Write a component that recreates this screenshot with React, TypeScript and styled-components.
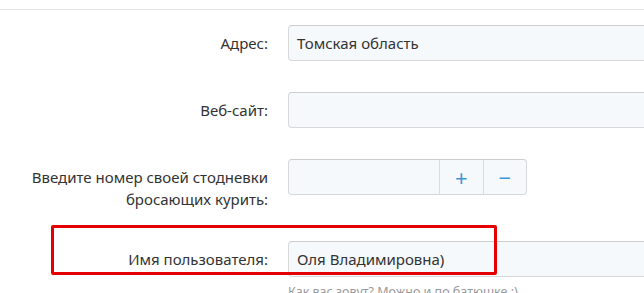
import styled, { createGlobalStyle } from 'styled-components'

const GlobalStyle = createGlobalStyle`
    html, body {
        margin: 0;
        padding: 0;
        background: #fff;
        overflow: hidden;
    }
    body {
        font-family: "Noto Sans", "Open Sans", sans-serif;
        color: #333;
    }
`

type FieldProps = {
    label: string[]
    children: React.ReactNode
    hint?: string
    highlighted?: boolean
}

function Field(props: FieldProps) {
    return (
        <Row>
            {props.highlighted && <Highlight />}
            <Label>
                {props.label.map((line, i) => <span key={i}>{line}</span>)}
            </Label>
            <Control>
                {props.children}
                {props.hint && <Hint>{props.hint}</Hint>}
            </Control>
        </Row>
    )
}

function App() {
    return (
        <>
            <GlobalStyle />
            <Page>
                <Form>
                    <Field label={['Адрес:']}>
                        <Input>Томская область</Input>
                    </Field>
                    <Field label={['Веб-сайт:']}>
                        <Input />
                    </Field>
                    <Field label={['Введите номер своей стодневки', 'бросающих курить:']}>
                        <Spinner>
                            <SpinnerValue />
                            <SpinnerButton>+</SpinnerButton>
                            <SpinnerButton>−</SpinnerButton>
                        </Spinner>
                    </Field>
                    <Field label={['Имя пользователя:']} hint="Как вас зовут? Можно и по батюшке :)" highlighted>
                        <Input>Оля Владимировна)</Input>
                    </Field>
                </Form>
            </Page>
        </>
    )
}

const Page = styled.div`
    width: 644px;
    height: 293px;
    overflow: hidden;
    padding-top: 9px;
    box-sizing: border-box;
`

const Form = styled.div`
    border-top: 1px solid #e2e2e2;
    padding-top: 15px;
    display: flex;
    flex-direction: column;
    gap: 31px;
`

const Row = styled.div`
    position: relative;
    display: grid;
    grid-template-columns: 268px 420px;
    column-gap: 20px;
    align-items: start;
`

const Highlight = styled.div`
    position: absolute;
    top: -16px;
    left: 51px;
    width: 446px;
    height: 50px;
    box-sizing: border-box;
    border: 3px solid #e40000;
    border-radius: 2px;
    z-index: 2;
    pointer-events: none;
`

const Label = styled.div`
    display: flex;
    flex-direction: column;
    align-items: flex-end;
    text-align: right;
    padding-top: 7px;
    font-size: 15px;
    line-height: 22px;
    color: #333;
    white-space: nowrap;
`

const Control = styled.div`
    display: flex;
    flex-direction: column;
`

const Input = styled.div`
    height: 36px;
    box-sizing: border-box;
    padding: 0 8px;
    display: flex;
    align-items: center;
    background: #f6f9fc;
    border: 1px solid #d8d8d8;
    border-top-color: #cdcdcd;
    border-radius: 4px;
    font-size: 15px;
    color: #333;
`

const Spinner = styled.div`
    display: flex;
    width: 239px;
    height: 36px;
    box-sizing: border-box;
    background: #f6f9fc;
    border: 1px solid #d8d8d8;
    border-top-color: #cdcdcd;
    border-radius: 4px;
`

const SpinnerValue = styled.div`
    width: 150px;
`

const SpinnerButton = styled.div`
    flex: 1;
    display: flex;
    align-items: center;
    justify-content: center;
    border-left: 1px solid #dcdcdc;
    color: #3a97d6;
    font-size: 22px;
`

const Hint = styled.div`
    margin-top: 6px;
    font-size: 12.5px;
    color: #9a9a9a;
    white-space: nowrap;
`

export default App
